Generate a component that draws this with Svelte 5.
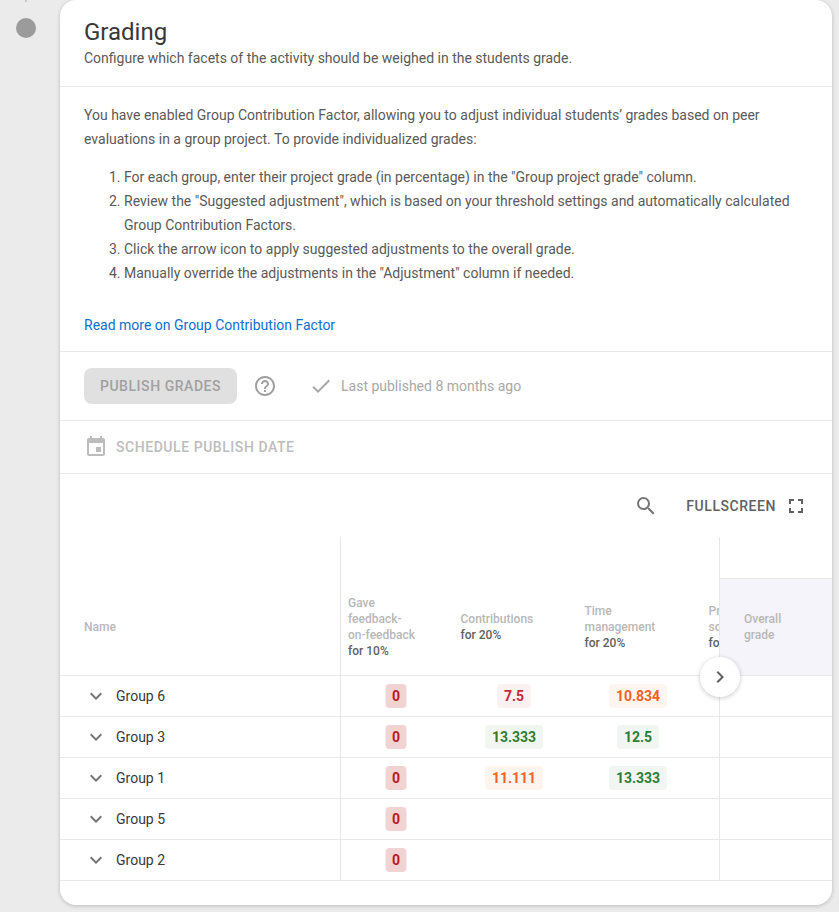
<script>
  const columns = [
    { lines: ['Gave', 'feedback-', 'on-feedback'], weight: 'for 10%' },
    { lines: ['Contributions'], weight: 'for 20%' },
    { lines: ['Time', 'management'], weight: 'for 20%' },
    { lines: ['Problem', 'solving'], weight: 'for 20%' }
  ];
  const groups = [
    { name: 'Group 6', scores: [['0', 'red'], ['7.5', 'pink'], ['10.834', 'orange']] },
    { name: 'Group 3', scores: [['0', 'red'], ['13.333', 'green'], ['12.5', 'green']] },
    { name: 'Group 1', scores: [['0', 'red'], ['11.111', 'orange'], ['13.333', 'green']] },
    { name: 'Group 5', scores: [['0', 'red']] },
    { name: 'Group 2', scores: [['0', 'red']] }
  ];
  const steps = [
    'For each group, enter their project grade (in percentage) in the "Group project grade" column.',
    'Review the "Suggested adjustment", which is based on your threshold settings and automatically calculated Group Contribution Factors.',
    'Click the arrow icon to apply suggested adjustments to the overall grade.',
    'Manually override the adjustments in the "Adjustment" column if needed.'
  ];
</script>

<div class="page">
  <aside class="rail">
    <span class="tick"></span>
    <span class="dot"></span>
  </aside>
  <main class="card">
    <header class="head">
      <h1>Grading</h1>
      <p>Configure which facets of the activity should be weighed in the students grade.</p>
    </header>

    <section class="intro">
      <p>You have enabled Group Contribution Factor, allowing you to adjust individual students’ grades based on peer evaluations in a group project. To provide individualized grades:</p>
      <ol>
        {#each steps as step}
          <li>{step}</li>
        {/each}
      </ol>
      <a href="#more">Read more on Group Contribution Factor</a>
    </section>

    <section class="publish">
      <button class="primary" disabled>PUBLISH GRADES</button>
      <svg class="help" width="24" height="24" viewBox="0 0 24 24" fill="#9e9e9e"><path d="M11 18h2v-2h-2v2zm1-16C6.48 2 2 6.48 2 12s4.48 10 10 10 10-4.48 10-10S17.52 2 12 2zm0 18c-4.41 0-8-3.59-8-8s3.59-8 8-8 8 3.59 8 8-3.59 8-8 8zm0-14c-2.21 0-4 1.79-4 4h2c0-1.1.9-2 2-2s2 .9 2 2c0 2-3 1.75-3 5h2c0-2.25 3-2.5 3-5 0-2.21-1.79-4-4-4z"/></svg>
      <svg class="check" width="24" height="24" viewBox="0 0 24 24" fill="#a8a8a8"><path d="M9 16.17 4.83 12l-1.42 1.41L9 19 21 7l-1.41-1.41z"/></svg>
      <span class="published">Last published 8 months ago</span>
    </section>

    <section class="schedule">
      <svg width="24" height="24" viewBox="0 0 24 24" fill="#bdbdbd"><path d="M17 12h-5v5h5v-5zM16 1v2H8V1H6v2H5c-1.11 0-1.99.9-1.99 2L3 19c0 1.1.89 2 2 2h14c1.1 0 2-.9 2-2V5c0-1.1-.9-2-2-2h-1V1h-2zm3 18H5V8h14v11z"/></svg>
      <span>SCHEDULE PUBLISH DATE</span>
    </section>

    <div class="toolbar">
      <svg class="search" width="24" height="24" viewBox="0 0 24 24" fill="#757575"><path d="M15.5 14h-.79l-.28-.27A6.47 6.47 0 0 0 16 9.5 6.5 6.5 0 1 0 9.5 16c1.61 0 3.09-.59 4.23-1.57l.27.28v.79l5 4.99L20.49 19l-4.99-5zm-6 0C7.01 14 5 11.99 5 9.5S7.01 5 9.5 5 14 7.01 14 9.5 11.99 14 9.5 14z"/></svg>
      <span class="fs-label">FULLSCREEN</span>
      <svg width="24" height="24" viewBox="0 0 24 24" fill="#616161"><path d="M7 14H5v5h5v-2H7v-3zm-2-4h2V7h3V5H5v5zm12 7h-3v2h5v-5h-2v3zM14 5v2h3v3h2V5h-5z"/></svg>
    </div>

    <div class="table">
      <div class="scroller">
        <div class="row header">
          <div class="name-cell th">Name</div>
          {#each columns as col}
            <div class="col th">
              {#each col.lines as line}<span>{line}</span>{/each}
              <b>{col.weight}</b>
            </div>
          {/each}
        </div>
        {#each groups as group}
          <div class="row body">
            <div class="name-cell">
              <svg width="24" height="24" viewBox="0 0 24 24" fill="#757575"><path d="M16.59 8.59 12 13.17 7.41 8.59 6 10l6 6 6-6z"/></svg>
              <span>{group.name}</span>
            </div>
            {#each [0, 1, 2, 3] as i}
              <div class="col score">
                {#if group.scores[i]}
                  <span class="badge {group.scores[i][1]}">{group.scores[i][0]}</span>
                {/if}
              </div>
            {/each}
          </div>
        {/each}
      </div>
      <div class="pinned">
        <div class="pin-head"><div class="pin-label">Overall<br />grade</div></div>
        {#each groups as group}
          <div class="pin-cell"></div>
        {/each}
      </div>
      <button class="next" aria-label="Scroll right">
        <svg width="24" height="24" viewBox="0 0 24 24" fill="#616161"><path d="M10 6 8.59 7.41 13.17 12l-4.58 4.59L10 18l6-6z"/></svg>
      </button>
    </div>
  </main>
</div>

<style>
  :global(body) {
    margin: 0;
    background: #ebebeb;
    font-family: Roboto, "Liberation Sans", sans-serif;
    overflow: hidden;
  }
  .page {
    display: flex;
    height: 912px;
    box-sizing: border-box;
    padding-right: 7px;
  }
  .rail {
    width: 60px;
    flex: none;
    display: flex;
    flex-direction: column;
    align-items: center;
    padding-right: 8px;
    box-sizing: border-box;
  }
  .tick {
    width: 2px;
    height: 2px;
    background: #c8c8c8;
  }
  .dot {
    width: 20px;
    height: 20px;
    margin-top: 16px;
    border-radius: 50%;
    background: #9b9b9b;
  }
  .card {
    flex: 1;
    height: 905px;
    background: #fff;
    border-radius: 16px;
    box-shadow: 0 1px 4px rgba(0, 0, 0, 0.2);
    overflow: hidden;
    display: flex;
    flex-direction: column;
    color: #424242;
  }
  .head {
    height: 87px;
    flex: none;
    box-sizing: border-box;
    padding: 18px 24px 0;
    border-bottom: 1px solid #e8e8e8;
  }
  h1 {
    margin: 0;
    font-size: 24px;
    font-weight: 400;
    line-height: 28px;
    color: #383838;
  }
  .head p {
    margin: 2px 0 0;
    font-size: 14px;
    line-height: 20px;
    color: #5a5a5a;
  }
  .intro {
    height: 265px;
    flex: none;
    box-sizing: border-box;
    padding: 16px 24px 0;
    border-bottom: 1px solid #e8e8e8;
    font-size: 14px;
    line-height: 24px;
    color: #5a5a5a;
  }
  .intro p {
    margin: 0;
  }
  ol {
    margin: 14px 0 0;
    padding: 0 0 0 40px;
  }
  a {
    display: block;
    margin-top: 28px;
    color: #0b6fd3;
    text-decoration: none;
  }
  .publish {
    height: 69px;
    flex: none;
    box-sizing: border-box;
    padding-left: 24px;
    display: flex;
    align-items: center;
    border-bottom: 1px solid #e8e8e8;
  }
  .primary {
    width: 153px;
    height: 36px;
    border: 0;
    border-radius: 8px;
    background: #e0e0e0;
    color: #a0a0a0;
    font: 500 14px Roboto, sans-serif;
    letter-spacing: 0.55px;
    padding: 0;
  }
  .help {
    margin-left: 16px;
  }
  .check {
    margin-left: 32px;
  }
  .published {
    margin-left: 8px;
    font-size: 14px;
    color: #a8a8a8;
  }
  .schedule {
    height: 53px;
    flex: none;
    box-sizing: border-box;
    padding-left: 24px;
    display: flex;
    align-items: center;
    gap: 8px;
    border-bottom: 1px solid #e8e8e8;
    font-size: 14px;
    font-weight: 500;
    letter-spacing: 0.55px;
    color: #bdbdbd;
  }
  .toolbar {
    height: 63px;
    flex: none;
    display: flex;
    align-items: center;
    justify-content: flex-end;
    padding-right: 24px;
    color: #616161;
  }
  .search {
    margin-right: 28px;
  }
  .fs-label {
    font-size: 14px;
    font-weight: 500;
    letter-spacing: 0.55px;
    margin-right: 8px;
  }
  .table {
    position: relative;
    display: flex;
    height: 344px;
    flex: none;
  }
  .scroller {
    width: 659px;
    flex: none;
    overflow: hidden;
  }
  .row {
    display: grid;
    grid-template-columns: 281px 111px 124px 124px 124px;
    width: 764px;
    border-bottom: 1px solid #e8e8e8;
    box-sizing: border-box;
  }
  .header {
    height: 139px;
  }
  .body {
    height: 41px;
  }
  .name-cell {
    display: flex;
    align-items: center;
    border-right: 1px solid #e8e8e8;
    font-size: 14px;
    color: #383838;
  }
  .name-cell svg {
    margin-left: 24px;
    margin-right: 8px;
  }
  .th {
    font-size: 12px;
    font-weight: 500;
    line-height: 16px;
    color: #b8b8b8;
  }
  .name-cell.th {
    padding-left: 24px;
    padding-top: 42px;
    box-sizing: border-box;
    color: #b8b8b8;
    font-size: 12px;
  }
  .col.th {
    display: flex;
    flex-direction: column;
    justify-content: center;
    padding-left: 8.5px;
    padding-top: 42px;
    box-sizing: border-box;
    white-space: nowrap;
    overflow: hidden;
  }
  .name-cell.th + .col.th {
    padding-left: 7px;
  }
  .col.th b {
    font-weight: 500;
    color: #616161;
  }
  .score {
    display: flex;
    align-items: center;
    justify-content: center;
  }
  .badge {
    height: 24px;
    padding: 0 6.5px;
    box-sizing: border-box;
    border-radius: 4px;
    font-size: 14px;
    font-weight: 700;
    line-height: 24px;
  }
  .red {
    background: #f2d3d3;
    color: #b71c1c;
    padding: 0 6px;
    transform: translateX(-0.5px);
  }
  .pink {
    background: #fbf1f2;
    color: #c62838;
  }
  .orange {
    background: #fef5f0;
    color: #f4621f;
  }
  .green {
    background: #f1f6f2;
    color: #2e7d32;
  }
  .pinned {
    flex: 1;
    border-left: 1px solid #e8e8e8;
    display: flex;
    flex-direction: column;
  }
  .pin-head {
    height: 139px;
    box-sizing: border-box;
    padding-top: 41px;
    flex: none;
    border-bottom: 1px solid #e8e8e8;
  }
  .pin-label {
    height: 97px;
    box-sizing: border-box;
    background: #f5f4fa;
    border-top: 1px solid #e8e8e8;
    padding: 32px 0 0 24px;
    font-size: 12px;
    font-weight: 500;
    line-height: 16px;
    color: #b8b8b8;
  }
  .pin-cell {
    height: 41px;
    flex: none;
    box-sizing: border-box;
    border-bottom: 1px solid #e8e8e8;
  }
  .next {
    position: absolute;
    left: 640px;
    top: 120px;
    width: 40px;
    height: 40px;
    padding: 0;
    border: 0;
    border-radius: 50%;
    background: #fff;
    box-shadow: 0 1px 5px rgba(0, 0, 0, 0.22);
    display: flex;
    align-items: center;
    justify-content: center;
  }
</style>
